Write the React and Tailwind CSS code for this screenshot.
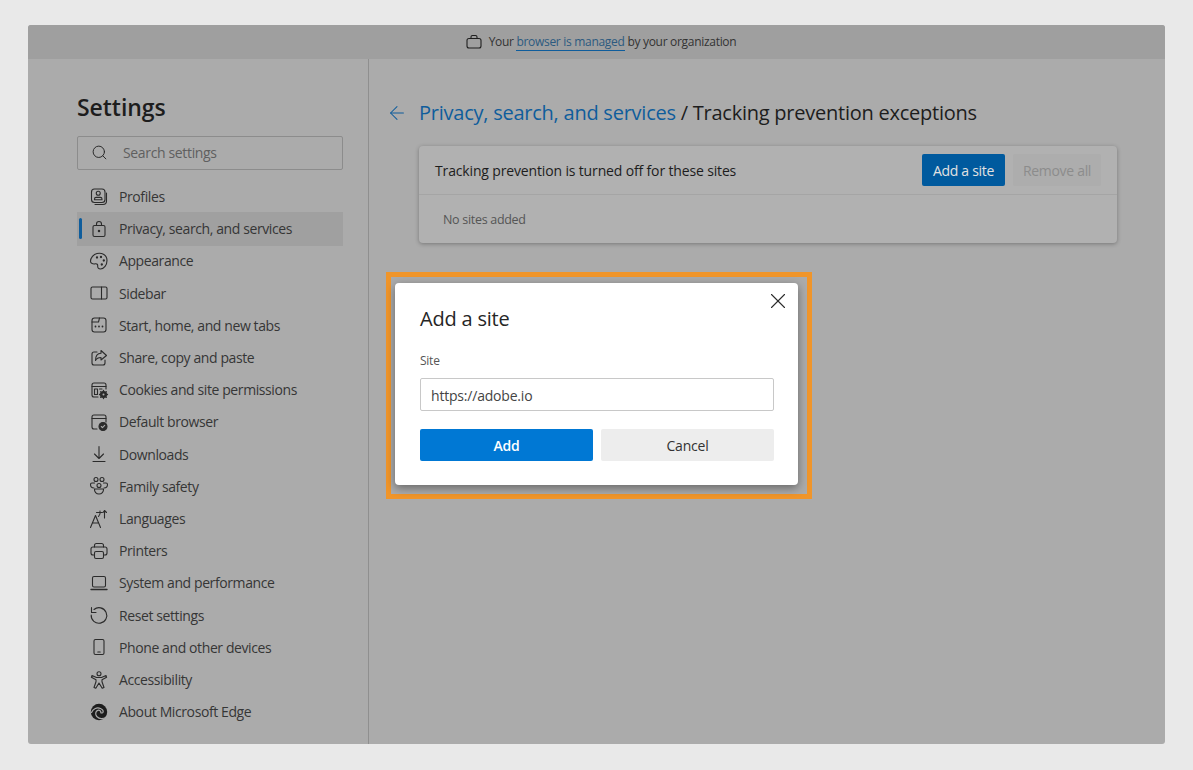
import React from 'react';
import { ArrowLeft, Search, X } from 'lucide-react';

const Icon = ({ children, size = 20 }) => (
  <svg width={size} height={size} viewBox="0 0 20 20" fill="none" stroke="#2b2b2b" strokeWidth="1.1" strokeLinecap="round" strokeLinejoin="round">
    {children}
  </svg>
);

const navItems = [
  {
    label: 'Profiles',
    icon: (
      <>
        <rect x="2.500" y="2" width="13.500" height="13.500" rx="3" />
        <path d="M17.500 6v8a3.500 3.500 0 0 1-3.500 3.500H6" />
        <circle cx="9.250" cy="6.300" r="2" />
        <path d="M5.500 12.800V12a1.600 1.600 0 0 1 1.600-1.600h4.300A1.600 1.600 0 0 1 13 12v.8z" />
      </>
    ),
  },
  {
    label: 'Privacy, search, and services',
    active: true,
    icon: (
      <>
        <rect x="4" y="6.500" width="12" height="11" rx="1.500" />
        <path d="M7.500 6.500V5a2.500 2.500 0 0 1 5 0v1.500" />
        <circle cx="10" cy="12" r=".7" fill="#2b2b2b" />
      </>
    ),
  },
  {
    label: 'Appearance',
    icon: (
      <>
        <path d="M8 2.500c5-1 10 1.500 10 7 0 4.500-3 8.500-6.500 8.500-2 0-3-1.300-2.800-2.800.2-1.700-.8-2.700-2.200-2.400-2.500.5-5-.2-5-2.500C1.500 7 4.500 3.200 8 2.500z" />
        <circle cx="8" cy="6.500" r=".6" fill="#2b2b2b" />
        <circle cx="12" cy="6" r=".6" fill="#2b2b2b" />
        <circle cx="14.800" cy="9.500" r=".6" fill="#2b2b2b" />
        <circle cx="12.800" cy="13.500" r=".6" fill="#2b2b2b" />
      </>
    ),
  },
  {
    label: 'Sidebar',
    icon: (
      <>
        <rect x="2" y="4" width="16" height="12" rx="1.500" />
        <path d="M12.500 4v12" />
      </>
    ),
  },
  {
    label: 'Start, home, and new tabs',
    icon: (
      <>
        <rect x="3" y="3" width="14" height="14" rx="2.500" />
        <path d="M3 7h6.500l1-4" />
        <path d="M6.500 11.500h.01M10 11.500h.01M13.500 11.500h.01" strokeWidth="1.800" />
      </>
    ),
  },
  {
    label: 'Share, copy and paste',
    icon: (
      <>
        <path d="M8 4H5a2 2 0 0 0-2 2v9a2 2 0 0 0 2 2h9a2 2 0 0 0 2-2v-3" />
        <path d="M12 2.500 17.500 7.500 12 12V9.500c-2.500 0-4.500 1-5.500 3 0-4 2-7 5.500-7.200z" />
      </>
    ),
  },
  {
    label: 'Cookies and site permissions',
    icon: (
      <>
        <path d="M9 17H5a2 2 0 0 1-2-2V5a2 2 0 0 1 2-2h10a2 2 0 0 1 2 2v4" />
        <path d="M3 6.500h14" />
        <rect x="5.500" y="9" width="3" height="5.500" />
        <path d="M10.500 9H13" />
        <circle cx="14.500" cy="14.500" r="3" fill="#2b2b2b" />
        <path d="M14.500 10.500v1M14.500 17.500v1M10.500 14.500h1M17.500 14.500h1M11.700 11.700l.7.7M16.600 16.600l.7.7M11.700 17.300l.7-.7M16.600 12.400l.7-.7" strokeWidth="1.300" />
        <circle cx="14.500" cy="14.500" r="1" fill="#ababab" stroke="none" />
      </>
    ),
  },
  {
    label: 'Default browser',
    icon: (
      <>
        <path d="M8 17H5a2 2 0 0 1-2-2V5a2 2 0 0 1 2-2h10a2 2 0 0 1 2 2v5" />
        <path d="M3 6.500h14" />
        <circle cx="14" cy="14.500" r="4" fill="#2b2b2b" />
        <path d="m12.300 14.500 1.200 1.200 2.200-2.300" stroke="#ababab" />
      </>
    ),
  },
  {
    label: 'Downloads',
    icon: (
      <>
        <path d="M10 2.500v12M5.500 10l4.500 4.500 4.500-4.500M4 17.500h12" />
      </>
    ),
  },
  {
    label: 'Family safety',
    icon: (
      <>
        <circle cx="7" cy="3.500" r="2" />
        <circle cx="13" cy="3.500" r="2" />
        <circle cx="10" cy="9.500" r="2" />
        <path d="M5.500 7H3A1.500 1.500 0 0 0 1.500 8.500c0 1.800 1.300 3.500 3.500 3.500M14.500 7H17a1.500 1.500 0 0 1 1.500 1.500c0 1.800-1.300 3.500-3.500 3.500" />
        <path d="M5.500 13h9c.3 3-1.800 5-4.500 5s-4.800-2-4.500-5z" />
      </>
    ),
  },
  {
    label: 'Languages',
    icon: (
      <>
        <path d="m1.500 18.500 5-12 5 12M3.500 14h6" />
        <path d="M7.500 3.500h5.500M11 2c.5 2-.2 4-1.500 5.500M15.500 9V1.500l-1.500 2M15.500 1.500l2 2" />
      </>
    ),
  },
  {
    label: 'Printers',
    icon: (
      <>
        <path d="M5.500 6V4.500a2 2 0 0 1 2-2h5a2 2 0 0 1 2 2V6" />
        <path d="M5 14H4a2 2 0 0 1-2-2V8a2 2 0 0 1 2-2h12a2 2 0 0 1 2 2v4a2 2 0 0 1-2 2h-1" />
        <rect x="5.500" y="10.500" width="9" height="7" rx="1.500" />
      </>
    ),
  },
  {
    label: 'System and performance',
    icon: (
      <>
        <rect x="3.500" y="3.500" width="13" height="10.500" rx="1.500" />
        <path d="M2 16.500h16" strokeWidth="1.400" />
      </>
    ),
  },
  {
    label: 'Reset settings',
    icon: (
      <>
        <path d="M5 4.500a7.800 7.800 0 1 1-2.800 5.500" />
        <path d="M2.500 2.500v5H7" />
      </>
    ),
  },
  {
    label: 'Phone and other devices',
    icon: (
      <>
        <rect x="5" y="2.500" width="10" height="15" rx="1.500" />
        <path d="M8.800 15h2.400" />
      </>
    ),
  },
  {
    label: 'Accessibility',
    icon: (
      <>
        <circle cx="10" cy="3.800" r="2" />
        <path d="M3 5.500 7.500 7.500h5L17 5.500l.6 1.800L13 9.800v2l2 5.700-1.800.8L10 13l-3.200 5.300-1.800-.8 2-5.700v-2L2.400 7.300z" />
      </>
    ),
  },
  {
    label: 'About Microsoft Edge',
    icon: (
      <>
        <circle cx="10" cy="10" r="8.200" fill="#1d1d1d" stroke="none" />
        <path d="M2.500 10.500C4 6.500 8 5 11.500 6.500c2 .9 3 2.500 2.500 3.800-.4.800-1.600.8-2.200.5.500-1.800-1.300-3-3-2.500-2.300.7-2.800 4-1 6.200 1.800 2 5.500 3 10 .5" stroke="#ababab" strokeWidth="1.200" />
      </>
    ),
  },
];

const NavRow = ({ label, icon, active }) => (
  <div className={`relative flex h-[34px] items-center pl-[12px] mb-[-1.800px] ${active ? 'bg-[#a0a0a0]' : ''}`}>
    {active && <span className="absolute left-[2px] top-[6px] h-[21px] w-[3px] rounded-sm bg-[#0f5d9c]" />}
    <span className="flex w-[30px] shrink-0">
      <Icon>{icon}</Icon>
    </span>
    <span className="text-[14px] tracking-[-0.400px] text-[#363636]">{label}</span>
  </div>
);

export default function App() {
  return (
    <div className="h-[770px] w-[1193px] bg-[#e9e9e9] pl-[28px] pr-[28px] pt-[25px] [font-family:'Open_Sans','Noto_Sans',sans-serif]">
      <div className="relative flex h-[719px] flex-col overflow-hidden rounded-[3px] bg-[#ababab]">
        <div className="flex h-[34px] shrink-0 items-center justify-center bg-[#9f9f9f] pl-[8px] text-[12px] tracking-[-0.300px] text-[#333]">
          <svg width="18" height="18" viewBox="0 0 18 18" fill="none" stroke="#1f1f1f" strokeWidth="1.100" className="mr-[6px]">
            <rect x="2" y="5.500" width="14" height="9.500" rx="2" />
            <path d="M6 5.500V4a1.500 1.500 0 0 1 1.500-1.500h3A1.500 1.500 0 0 1 12 4v1.500" />
          </svg>
          <span>
            Your <span className="border-b border-[#0f5d9c] text-[#2c5a80]">browser is managed</span> by your organization
          </span>
        </div>

        <div className="flex min-h-0 flex-1">
          <aside className="w-[341px] shrink-0 border-r border-[#8f8f8f] pl-[49px] pr-[25px] pt-[31px]">
            <h1 className="text-[23px] font-semibold leading-[34px] tracking-[-0.050px] text-[#1d1d1d]">Settings</h1>
            <div className="mb-[9.500px] mt-[12px] flex h-[34px] items-center rounded-[2px] border border-[#8c8c8c] pb-[1px] pl-[13px] text-[14px] tracking-[-0.350px] text-[#5f5f5f]">
              <Search size={17} strokeWidth={1.400} color="#2b2b2b" className="mr-[15px]" />
              Search settings
            </div>
            <nav>
              {navItems.map((item) => (
                <NavRow key={item.label} {...item} />
              ))}
            </nav>
          </aside>

          <main className="flex-1 pl-[17px] pt-[37px]">
            <div className="flex h-[34px] items-center">
              <ArrowLeft size={22} strokeWidth={1.100} color="#0f5d9c" className="mr-[11px]" />
              <span className="text-[20px] tracking-[-0.240px] text-[#1d1d1d]">
                <span className="font-medium text-[#0f5d9c]">Privacy, search, and services</span>
                <span className="font-medium"> / Tracking prevention exceptions</span>
              </span>
            </div>
            <section className="ml-[33px] mt-[16px] w-[698px] rounded-[4px] bg-[#b1b1b1] shadow-[0_1px_4px_rgba(0,0,0,0.3)]">
              <div className="flex h-[49px] items-center border-b border-[#a5a5a5] pl-[16px] pr-[16px]">
                <span className="text-[14px] font-medium tracking-[-0.150px] text-[#1d1d1d]">Tracking prevention is turned off for these sites</span>
                <button className="ml-auto h-[32px] w-[83px] rounded-[2px] bg-[#005a9e] text-[14px] tracking-[-0.300px] text-[#e2e2e2]">Add a site</button>
                <button className="ml-[8px] h-[32px] w-[88px] rounded-[2px] bg-[#adadad] text-[14px] tracking-[-0.300px] text-[#8c8c8c]">Remove all</button>
              </div>
              <div className="flex h-[48px] items-center pl-[24px] pt-[2px] text-[12.500px] tracking-[-0.300px] text-[#555]">No sites added</div>
            </section>
          </main>
        </div>

        <div className="absolute left-[358px] top-[247px] border-[5px] border-[#f0952a] pb-[9px] pl-[4px] pr-[9px] pt-[6px]">
          <div className="relative h-[202px] w-[403px] rounded-[4px] bg-white pl-[25px] pr-[24px] pt-[20px] shadow-[0_3px_10px_rgba(0,0,0,0.4)]">
            <X size={26} strokeWidth={1} color="#2b2b2b" className="absolute right-[7px] top-[5px]" />
            <h2 className="text-[20px] font-medium leading-[32px] tracking-[-0.200px] text-[#262626]">Add a site</h2>
            <label className="mt-[17px] block text-[12px] leading-[18px] tracking-[-0.250px] text-[#555]">Site</label>
            <div className="mt-[8px] flex h-[33px] items-center rounded-[2px] border border-[#c8c8c8] pl-[10px] pt-[1px] text-[14px] tracking-[-0.200px] text-[#444]">https://adobe.io</div>
            <div className="mt-[18px] flex gap-[8px]">
              <button className="h-[32px] flex-1 rounded-[2px] bg-[#0078d4] text-[14px] font-semibold tracking-[-0.200px] text-white">Add</button>
              <button className="h-[32px] flex-1 rounded-[2px] bg-[#ededed] text-[14px] font-medium tracking-[-0.200px] text-[#333]">Cancel</button>
            </div>
          </div>
        </div>
      </div>
    </div>
  );
}
